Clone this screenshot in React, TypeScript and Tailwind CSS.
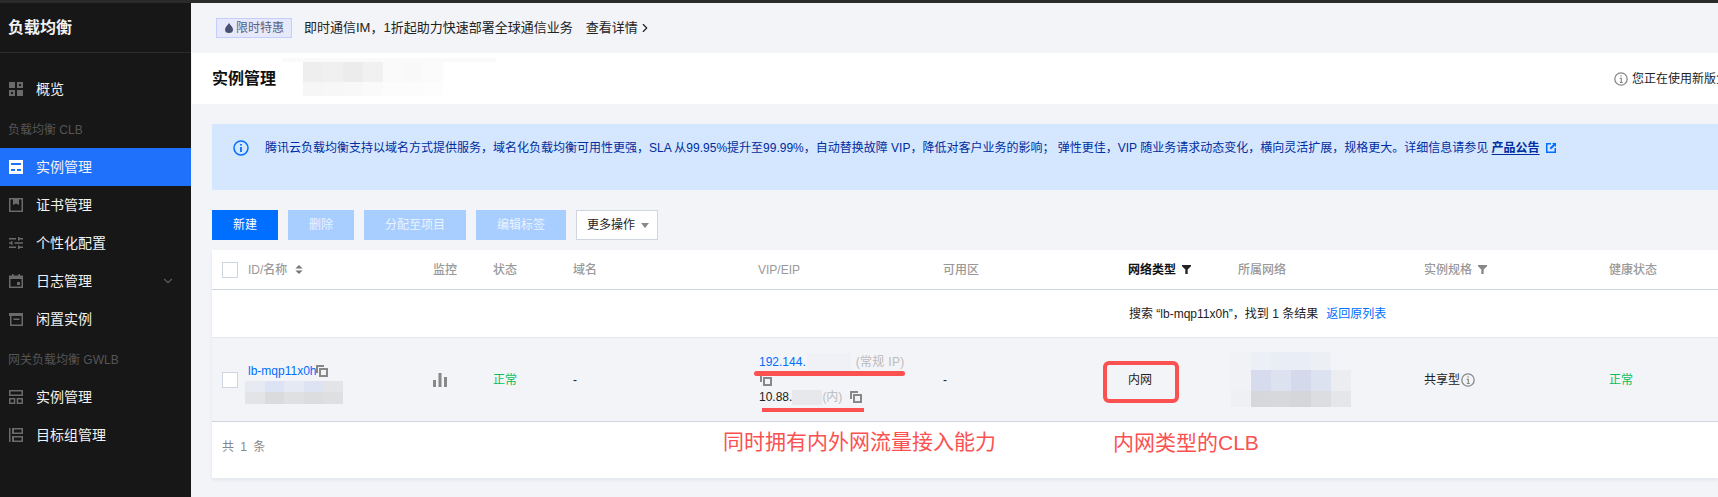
import { ReactNode } from "react";
import { ChevronDown, ChevronRight } from "lucide-react";

const gridCols =
  "grid grid-cols-[36px_185px_60px_80px_185px_185px_185px_110px_186px_185px_110px]";

function NavIcon({ children, active }: { children: ReactNode; active?: boolean }) {
  return (
    <svg
      viewBox="0 0 14 14"
      className={`w-[14px] h-[14px] shrink-0 ${active ? "text-white" : "text-[#6b6b6b]"}`}
      fill="currentColor"
      fillRule="evenodd"
    >
      {children}
    </svg>
  );
}

const overviewIcon = <path d="M0 0h6v6H0zM8 0h6v6H8zM10 2v2h2V2zM0 8h6v6H0zM2 10v2h2v-2zM8 8h6v6H8z" />;
const instanceIcon = <path d="M0 0h14v14H0zM2 3v2h10V3zM2 9v2h4V9zM8 9v2h4V9z" />;
const certIcon = <path d="M0 0h14v14H0zM1.500 1.500v11h11v-11H10V7L7 5.500 4 7V1.500z" />;
const configIcon = <path d="M0 2h7v1.500H0zM9 1h1.500v1H14v1.500h-3.500v1H9zM0 6.200h2v-1h1.500v3.500H2v-1H0zM5.500 6.200H14v1.500H5.500zM0 10.500h7v1.500H0zM9 9.500h1.500v1H14V12h-3.500v1H9z" />;
const logIcon = <path d="M3 0h1.500v1.500h5V0H11v1.500h3V14H0V1.500h3zM1.500 5v7.500h11V5zM8 8h3v3H8z" />;
const idleIcon = <path d="M0 1h15v3h-1v10H1V4H0zM2.500 4v8.500h10V4zM4.500 6.500h6V8h-6z" />;
const targetIcon = <path d="M0 0h1.500v14H0zM3 0h11v6H3zM5 1.500v3h7.500v-3zM3 8h11v6H3zM5 9.500v3h7.500v-3z" />;
const gwInstanceIcon = <path d="M0 0h14v6H0zM1.500 1.500v3h11v-3zM0 8h6.300v6H0zM1.500 9.500v3h3.300v-3zM7.700 8H14v6H7.700zM9.200 9.500v3h3.300v-3z" />;

function NavItem({ icon, label, active, arrow }: { icon: ReactNode; label: string; active?: boolean; arrow?: boolean }) {
  return (
    <div className={`h-[38px] flex items-center pl-[9px] pr-[16px] ${active ? "bg-[#1f70fb]" : ""}`}>
      <NavIcon active={active}>{icon}</NavIcon>
      <span className="ml-[13px] text-[14px] text-[#f2f2f2]">{label}</span>
      {arrow && <ChevronDown className="ml-auto w-[14px] h-[14px] text-[#5a5a5a]" />}
    </div>
  );
}

function Mosaic({ rows, cell, heights }: { rows: string[][]; cell: number; heights: number[] }) {
  return (
    <div className="flex flex-col shrink-0">
      {rows.map((row, i) => (
        <div key={i} className="flex">
          {row.map((c, j) => (
            <div key={j} style={{ backgroundColor: c, width: cell, height: heights[i] }} />
          ))}
        </div>
      ))}
    </div>
  );
}

function CopyIcon() {
  return (
    <svg viewBox="0 0 12 12" className="w-[12px] h-[12px] shrink-0 text-[#888]" fill="currentColor" fillRule="evenodd">
      <path d="M0 0h8v2H2v6H0zM3 3h9v9H3zM5 5v5h5V5z" />
    </svg>
  );
}

function InfoIcon() {
  return (
    <svg viewBox="0 0 14 14" className="w-[14px] h-[14px] shrink-0 text-[#888]" fill="none" stroke="currentColor">
      <circle cx="7" cy="7" r="6.200" strokeWidth="1.300" />
      <path d="M5.800 6.300H7.300V10.500M5.800 10.500H8.800" strokeWidth="1.200" />
      <rect x="6.400" y="3.300" width="1.300" height="1.300" fill="currentColor" stroke="none" />
    </svg>
  );
}

function FilterIcon({ dark }: { dark?: boolean }) {
  return (
    <svg viewBox="0 0 10 10" className={`w-[9px] h-[9px] ml-[6px] ${dark ? "text-[#222]" : "text-[#888]"}`} fill="currentColor">
      <path d="M0 0h10v1.500L6.300 5v5H3.700V5L0 1.500z" />
    </svg>
  );
}

function Checkbox() {
  return <div className="w-[16px] h-[16px] bg-white border border-[#cfd5de]" />;
}

function HeaderCell({ children, className }: { children: ReactNode; className?: string }) {
  return <div className={`flex items-center text-[12px] font-medium text-[#999] ${className ?? ""}`}>{children}</div>;
}

export default function App() {
  return (
    <div className="w-[1718px] h-[497px] overflow-hidden flex flex-col bg-[#f2f4f8] text-[12px] text-[#222] [font-family:'Liberation_Sans','Noto_Sans_CJK_SC',sans-serif]">
      <div className="h-[3px] shrink-0 bg-[#2a2a2a]" />
      <div className="flex flex-1 min-h-0">
        {/* sidebar */}
        <aside className="w-[191px] shrink-0 bg-[#171717]">
          <div className="h-[50px] pl-[8px] flex items-center border-b border-[#2c2c2c] text-[16px] font-bold text-[#f2f2f2]">
            负载均衡
          </div>
          <div className="h-[17px]" />
          <NavItem icon={overviewIcon} label="概览" />
          <div className="h-[40px] pl-[8px] pt-[3px] flex items-center text-[#555]">负载均衡 CLB</div>
          <NavItem icon={instanceIcon} label="实例管理" active />
          <NavItem icon={certIcon} label="证书管理" />
          <NavItem icon={configIcon} label="个性化配置" />
          <NavItem icon={logIcon} label="日志管理" arrow />
          <NavItem icon={idleIcon} label="闲置实例" />
          <div className="h-[40px] pl-[8px] pt-[3px] flex items-center text-[#555]">网关负载均衡 GWLB</div>
          <NavItem icon={gwInstanceIcon} label="实例管理" />
          <NavItem icon={targetIcon} label="目标组管理" />
        </aside>

        <main className="flex-1 min-w-0 ml-px flex flex-col">
          {/* promo bar */}
          <div className="h-[50px] shrink-0 pl-[24px] flex items-center text-[13px]">
            <span className="w-[76px] h-[20px] flex items-center pl-[8px] bg-[#e5e9fb] border border-[#c5cdfa] text-[12px] text-[#5a6080]">
              <svg viewBox="0 0 8 10" className="w-[8px] h-[10px] mr-[3px] text-[#4a5070]" fill="currentColor">
                <path d="M4 0C5 2 8 4 8 6.500A4 3.500 0 0 1 0 6.500C0 4 3 2 4 0z" />
              </svg>
              限时特惠
            </span>
            <span className="ml-[12px]">即时通信IM，1折起助力快速部署全球通信业务</span>
            <span className="ml-[13px]">查看详情</span>
            <ChevronRight className="w-[14px] h-[14px]" />
          </div>

          {/* title bar */}
          <div className="relative h-[51px] shrink-0 bg-white pl-[20px] flex items-center">
            <span className="text-[16px] font-bold text-[#111]">实例管理</span>
            <div className="absolute left-[90px] top-[5px] w-[214px] h-[4px] bg-[#fafafa]" />
            <div className="absolute left-[111px] top-[9px]">
              <Mosaic
                cell={20}
                heights={[20, 14]}
                rows={[
                  ["#eeeeee", "#f0f0f0", "#ececec", "#f1f1f1", "#fafafa", "#f8f9f8", "#fbfbfb"],
                  ["#f6f6f6", "#f7f7f7", "#f8f8f8", "#fafafa", "#fcfcfc", "#fcfcfc", "#fdfdfd"],
                ]}
              />
            </div>
            <div className="ml-auto flex items-center gap-[4px] pr-0 w-[104px] shrink-0 overflow-hidden whitespace-nowrap">
              <InfoIcon />
              <span>您正在使用新版负载均衡</span>
            </div>
          </div>

          <div className="flex-1 min-h-0 pt-[20px] pl-[20px] flex flex-col">
            {/* notice */}
            <div className="h-[66px] shrink-0 bg-[#d5e7ff] pl-[21px] pt-[16px] flex items-start text-[#002da0]">
              <svg viewBox="0 0 16 16" className="w-[16px] h-[16px] shrink-0 text-[#006eff]" fill="none" stroke="currentColor">
                <circle cx="8" cy="8" r="7" strokeWidth="1.500" />
                <path d="M8 7v5" strokeWidth="1.800" />
                <path d="M8 4v1.600" strokeWidth="1.800" />
              </svg>
              <p className="ml-[16px] whitespace-nowrap leading-[16px]">
                腾讯云负载均衡支持以域名方式提供服务，域名化负载均衡可用性更强，SLA 从99.95%提升至99.99%，自动替换故障 VIP，降低对客户业务的影响； 弹性更佳，VIP 随业务请求动态变化，横向灵活扩展，规格更大。详细信息请参见{" "}
                <span className="font-bold underline underline-offset-2">产品公告</span>
              </p>
              <svg viewBox="0 0 10 10" className="ml-[6px] mt-[3px] w-[10px] h-[10px] shrink-0 text-[#006eff]" fill="currentColor" fillRule="evenodd">
                <path d="M0 0h5v1.500H1.500v7h7V5H10v5H0zM6 0h4v4L8.700 2.700 5 6.400 3.600 5l3.700-3.700z" />
              </svg>
            </div>

            {/* toolbar */}
            <div className="mt-[20px] shrink-0 flex gap-[10px] text-white">
              <button className="w-[66px] h-[30px] bg-[#006eff]">新建</button>
              <button className="w-[66px] h-[30px] bg-[#a8ceff] text-[#eaf3ff]">删除</button>
              <button className="w-[102px] h-[30px] bg-[#a8ceff] text-[#eaf3ff]">分配至项目</button>
              <button className="w-[90px] h-[30px] bg-[#a8ceff] text-[#eaf3ff]">编辑标签</button>
              <button className="w-[82px] h-[30px] bg-white border border-[#cfd5de] text-[#222] flex items-center pl-[10px]">
                更多操作
                <span className="ml-[6px] border-x-[4px] border-x-transparent border-t-[5px] border-t-[#888]" />
              </button>
            </div>

            {/* table */}
            <div className="mt-[10px] w-[1506px] bg-white shadow-[0_2px_3px_rgba(54,58,80,0.08)]">
              <div className={`${gridCols} h-[40px] border-b border-[#cfd5de]`}>
                <div className="flex items-center pl-[10px]"><Checkbox /></div>
                <HeaderCell>
                  ID/名称
                  <svg viewBox="0 0 8 10" className="ml-[8px] w-[8px] h-[9px] text-[#777]" fill="currentColor">
                    <path d="M4 0l4 4H0zM4 10L0 6h8z" />
                  </svg>
                </HeaderCell>
                <HeaderCell>监控</HeaderCell>
                <HeaderCell>状态</HeaderCell>
                <HeaderCell>域名</HeaderCell>
                <HeaderCell>VIP/EIP</HeaderCell>
                <HeaderCell>可用区</HeaderCell>
                <HeaderCell className="!text-[#111] !font-bold">
                  网络类型
                  <FilterIcon dark />
                </HeaderCell>
                <HeaderCell>所属网络</HeaderCell>
                <HeaderCell>
                  实例规格
                  <FilterIcon />
                </HeaderCell>
                <HeaderCell>健康状态</HeaderCell>
              </div>

              <div className={`${gridCols} h-[48px] border-b border-[#e4e7ed]`}>
                <div className="col-start-8 col-span-4 flex items-center pl-[1px]">
                  搜索 “lb-mqp11x0h”，找到 1 条结果
                  <span className="ml-[8px] text-[#006eff]">返回原列表</span>
                </div>
              </div>

              <div className={`${gridCols} h-[84px] bg-[#f3f4f7] border-b border-[#cfd5de]`}>
                <div className="flex items-center pl-[10px]"><Checkbox /></div>
                <div className="flex flex-col justify-center pt-[8px]">
                  <div className="flex items-center h-[16px] text-[#006eff]">
                    lb-mqp11x0h
                    <CopyIcon />
                  </div>
                  <div className="-ml-[3px] mt-[2px] flex">
                    <Mosaic
                      cell={19.6}
                      heights={[11, 12]}
                      rows={[
                        ["#e7eaf3", "#dce3f4", "#e5e9f4", "#dde3f3", "#e3e4e8"],
                        ["#e2e4e6", "#d9dbdc", "#dfe0e2", "#dcdddf", "#dddfe1"],
                      ]}
                    />
                  </div>
                </div>
                <div className="flex items-center">
                  <svg viewBox="0 0 14 14" className="w-[14px] h-[14px] text-[#888]" fill="currentColor">
                    <path d="M0 7h3v7H0zM5.500 0h3v14h-3zM11 4h3v10h-3z" />
                  </svg>
                </div>
                <div className="flex items-center text-[#0abf5b]">正常</div>
                <div className="flex items-center">-</div>

                <div className="relative flex flex-col justify-center">
                  <div className="h-[18px] flex items-center pl-px">
                    <span className="text-[#006eff]">192.144.</span>
                    <div className="ml-[1px] w-[44px] h-[18px] bg-[#eff1f6]" />
                    <span className="ml-[5px] text-[#bbb] tracking-[0.3px]">(常规 IP)</span>
                  </div>
                  <div className="h-[17px] flex items-center pl-[2px]"><CopyIcon /></div>
                  <div className="h-[18px] flex items-center pl-px">
                    <span>10.88.</span>
                    <div className="w-[30px] h-[15px] bg-[#e6e8ec]" />
                    <span className="text-[#bbb]">(内)</span>
                    <span className="ml-[8px]"><CopyIcon /></span>
                  </div>
                  <div className="absolute left-[-4px] top-[33px] w-[151px] h-[5px] rounded-full bg-[#fb5151]" />
                  <div className="absolute left-[4px] top-[70px] w-[102px] h-[4px] bg-[#fb5151]" />
                </div>

                <div className="flex items-center">-</div>
                <div className="relative flex items-center">
                  内网
                  <div className="absolute left-[-25px] top-[23px] w-[76px] h-[42px] rounded-[6px] border-[4px] border-[#fb5151]" />
                </div>
                <div className="flex items-center -ml-[7px]">
                  <Mosaic
                    cell={20}
                    heights={[18, 21, 16]}
                    rows={[
                      ["#f0f2f6", "#ecf0f6", "#e9edf6", "#e9edf6", "#ecf0f5", "#f3f4f7"],
                      ["#f1f2f6", "#d6dcee", "#dde2f0", "#d4daec", "#dde2f0", "#ebedf1"],
                      ["#eff0f3", "#d6d7db", "#d7d8dc", "#d5d6da", "#dcdde1", "#e5e6e9"],
                    ]}
                  />
                </div>
                <div className="flex items-center gap-[1px]">
                  共享型
                  <InfoIcon />
                </div>
                <div className="flex items-center text-[#0abf5b]">正常</div>
              </div>

              {/* footer */}
              <div className="relative h-[56px] flex items-center pb-[6px] pl-[10px] text-[#888] [word-spacing:3px]">
                共 1 条
                <span className="absolute left-[511px] top-[6px] text-[21px] leading-[28px] text-[#fb5151] [word-spacing:0]">
                  同时拥有内外网流量接入能力
                </span>
                <span className="absolute left-[901px] top-[7px] text-[21px] leading-[28px] text-[#fb5151] [word-spacing:0]">
                  内网类型的CLB
                </span>
              </div>
            </div>
          </div>
        </main>
      </div>
    </div>
  );
}
